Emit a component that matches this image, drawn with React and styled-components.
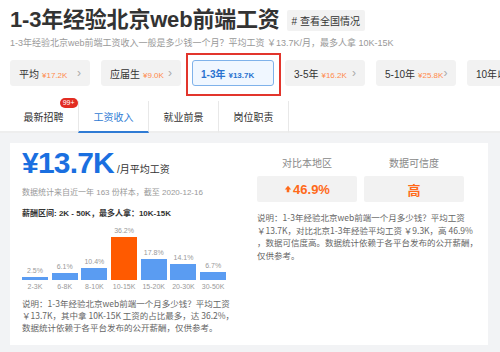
import React from "react";
import styled, { createGlobalStyle } from "styled-components";

const GlobalStyle = createGlobalStyle`
  body {
    margin: 0;
    background: #ffffff;
    font-family: "Liberation Sans", "Noto Sans CJK SC", sans-serif;
    color: #333333;
  }
`;

const filters = [
  { label: "平均", price: "¥17.2K" },
  { label: "应届生", price: "¥9.0K" },
  { label: "1-3年", price: "¥13.7K", active: true },
  { label: "3-5年", price: "¥16.2K" },
  { label: "5-10年", price: "¥25.8K" },
  { label: "10年以上", price: "¥32.1K" },
];

const tabs = [
  { label: "最新招聘", badge: "99+" },
  { label: "工资收入", active: true },
  { label: "就业前景" },
  { label: "岗位职责" },
];

const bars = [
  { range: "2-3K", pct: 2.5 },
  { range: "6-8K", pct: 6.1 },
  { range: "8-10K", pct: 10.4 },
  { range: "10-15K", pct: 36.2, top: true },
  { range: "15-20K", pct: 17.8 },
  { range: "20-30K", pct: 14.1 },
  { range: "30-50K", pct: 6.7 },
];

export default function App() {
  return (
    <Page>
      <GlobalStyle />
      <Header>
        <TitleRow>
          <Title>1-3年经验北京web前端工资</Title>
          <Tag># 查看全国情况</Tag>
        </TitleRow>
        <Subtitle>
          1-3年经验北京web前端工资收入一般是多少钱一个月？平均工资 ￥13.7K/月，最多人拿 10K-15K
        </Subtitle>
        <FilterRow>
          {filters.map((f) => (
            <Pill key={f.label} $active={f.active}>
              <PillText>
                <PillLabel $active={f.active}>{f.label}</PillLabel>
                <PillPrice $active={f.active}>{f.price}</PillPrice>
              </PillText>
              {!f.active && <Chevron>›</Chevron>}
            </Pill>
          ))}
        </FilterRow>
      </Header>

      <TabBar>
        {tabs.map((t) => (
          <Tab key={t.label} $active={t.active}>
            <TabLabel>
              {t.label}
              {t.badge && <Badge>{t.badge}</Badge>}
            </TabLabel>
          </Tab>
        ))}
      </TabBar>

      <Body>
        <Card>
          <LeftCol>
            <PriceLine>
              <BigPrice>¥13.7K</BigPrice>
              <PriceUnit>/月平均工资</PriceUnit>
            </PriceLine>
            <Meta>数据统计来自近一年 163 份样本，截至 2020-12-16</Meta>
            <Range>薪酬区间: 2K - 50K，最多人拿：10K-15K</Range>
            <Chart>
              {bars.map((b) => (
                <Column key={b.range}>
                  <Pct>{b.pct}%</Pct>
                  <Bar $top={b.top} style={{ height: `${b.pct * 1.2}px` }} />
                  <RangeLabel>{b.range}</RangeLabel>
                </Column>
              ))}
            </Chart>
            <Note>
              说明：1-3年经验北京web前端一个月多少钱？平均工资 ￥13.7K，其中拿 10K-15K 工资的占比最多，达 36.2%，数据统计依赖于各平台发布的公开薪酬，仅供参考。
            </Note>
          </LeftCol>

          <RightCol>
            <Stats>
              <Stat>
                <StatLabel>对比本地区</StatLabel>
                <StatBox>
                  <Arrow viewBox="0 0 10 10">
                    <path d="M5 1 L9 5.5 H6.6 V9 H3.4 V5.5 H1 Z" fill="currentColor" />
                  </Arrow>
                  46.9%
                </StatBox>
              </Stat>
              <Stat>
                <StatLabel>数据可信度</StatLabel>
                <StatBox>高</StatBox>
              </Stat>
            </Stats>
            <RightNote>
              说明：1-3年经验北京web前端一个月多少钱？平均工资 ￥13.7K，对比北京1-3年经验平均工资 ￥9.3K，高 46.9% ，数据可信度高。数据统计依赖于各平台发布的公开薪酬，仅供参考。
            </RightNote>
          </RightCol>
        </Card>
      </Body>
    </Page>
  );
}

const Page = styled.div`
  width: 500px;
  height: 352px;
  overflow: hidden;
  display: flex;
  flex-direction: column;
`;

const Header = styled.div`
  padding: 6px 0 0 10px;
`;

const TitleRow = styled.div`
  display: flex;
  align-items: center;
  gap: 7px;
`;

const Title = styled.h1`
  margin: 0;
  font-size: 22px;
  font-weight: bold;
  color: #333333;
  line-height: 28px;
  letter-spacing: -0.2px;
  white-space: nowrap;
`;

const Tag = styled.span`
  background: #f2f2f2;
  border-radius: 2px;
  font-size: 10px;
  color: #333333;
  padding: 3px 5px;
  white-space: nowrap;
`;

const Subtitle = styled.p`
  margin: 2px 0 0;
  font-size: 9px;
  color: #999999;
  white-space: nowrap;
`;

const FilterRow = styled.div`
  display: flex;
  gap: 11px;
  margin-top: 11px;
`;

const Pill = styled.div`
  position: relative;
  flex: 0 0 auto;
  box-sizing: border-box;
  width: ${(p) => (p.$active ? "82px" : "80px")};
  height: 26px;
  border-radius: 3px;
  padding: 0 8px;
  display: flex;
  align-items: center;
  justify-content: space-between;
  background: ${(p) => (p.$active ? "#f0f7ff" : "#f2f2f2")};
  border: 1px solid ${(p) => (p.$active ? "#7fb2ea" : "#f2f2f2")};

  ${(p) =>
    p.$active &&
    `
    &::after {
      content: "";
      position: absolute;
      left: -7px;
      right: -8px;
      top: -8px;
      bottom: -11px;
      border: 2px solid #e2352c;
    }
  `}
`;

const PillText = styled.span`
  display: flex;
  align-items: baseline;
  gap: 3px;
  white-space: nowrap;
`;

const PillLabel = styled.span`
  font-size: 10px;
  color: ${(p) => (p.$active ? "#2a72cf" : "#333333")};
  font-weight: ${(p) => (p.$active ? "bold" : "normal")};
`;

const PillPrice = styled.span`
  font-size: 8px;
  color: ${(p) => (p.$active ? "#2a72cf" : "#ff8a4c")};
  font-weight: ${(p) => (p.$active ? "bold" : "normal")};
`;

const Chevron = styled.span`
  font-size: 12px;
  color: #aaaaaa;
`;

const TabBar = styled.div`
  display: flex;
  margin-top: 15px;
  padding-left: 10px;
  height: 30px;
  border-bottom: 2px solid #eeeeee;
`;

const Tab = styled.div`
  width: 69px;
  display: flex;
  align-items: center;
  justify-content: center;
  font-size: 10px;
  color: ${(p) => (p.$active ? "#2f7bd4" : "#333333")};
  border-left: 1px solid ${(p) => (p.$active ? "#e8e8e8" : "transparent")};
  border-right: 1px solid #e8e8e8;
  margin-left: -1px;
  margin-bottom: -2px;
  border-bottom: 2px solid ${(p) => (p.$active ? "#2f7bd4" : "transparent")};
  &:first-child {
    border-left: none;
  }
`;

const TabLabel = styled.span`
  position: relative;
`;

const Badge = styled.span`
  position: absolute;
  top: -11px;
  right: -14px;
  background: #e22c22;
  color: #ffffff;
  font-size: 7px;
  line-height: 10px;
  padding: 0 3px;
  border-radius: 5px;
  white-space: nowrap;
`;

const Body = styled.div`
  flex: 1;
  background: #f2f3f5;
  padding: 10px 15px 7px 10px;
  display: flex;
`;

const Card = styled.div`
  flex: 1;
  background: #ffffff;
  display: flex;
`;

const LeftCol = styled.div`
  width: 235px;
  box-sizing: border-box;
  padding: 3px 12px 0 12px;
  display: flex;
  flex-direction: column;
`;

const PriceLine = styled.div`
  display: flex;
  align-items: baseline;
  gap: 3px;
`;

const BigPrice = styled.span`
  font-size: 30px;
  font-weight: bold;
  letter-spacing: -0.8px;
  color: #1a6fe0;
  line-height: 34px;
`;

const PriceUnit = styled.span`
  font-size: 10px;
  color: #333333;
`;

const Meta = styled.div`
  margin-top: 6px;
  font-size: 8px;
  color: #999999;
  white-space: nowrap;
`;

const Range = styled.div`
  margin-top: 10px;
  font-size: 8px;
  font-weight: bold;
  color: #333333;
  white-space: nowrap;
`;

const Chart = styled.div`
  margin-top: 9px;
  display: flex;
  align-items: flex-end;
  gap: 3.7px;
`;

const Column = styled.div`
  width: 26px;
  display: flex;
  flex-direction: column;
  align-items: center;
`;

const Pct = styled.span`
  font-size: 7px;
  color: #999999;
  margin-bottom: 3px;
`;

const Bar = styled.div`
  width: 26px;
  background: ${(p) => (p.$top ? "#ff5a00" : "#5a9cf2")};
`;

const RangeLabel = styled.span`
  margin-top: 3px;
  font-size: 7px;
  color: #999999;
  white-space: nowrap;
`;

const Note = styled.p`
  margin: 7px 0 0;
  width: 218px;
  font-family: "Noto Sans CJK SC", sans-serif;
  font-size: 8.5px;
  line-height: 12px;
  color: #666666;
  word-break: break-all;
`;

const RightCol = styled.div`
  flex: 1;
  padding: 12px 10px 0 12px;
  display: flex;
  flex-direction: column;
`;

const Stats = styled.div`
  display: flex;
  gap: 7px;
`;

const Stat = styled.div`
  width: 100px;
  display: flex;
  flex-direction: column;
  align-items: center;
  gap: 6px;
`;

const StatLabel = styled.span`
  font-size: 10px;
  color: #888888;
`;

const StatBox = styled.div`
  width: 100%;
  height: 26px;
  border-radius: 2px;
  background: #f2f2f2;
  display: flex;
  align-items: center;
  justify-content: center;
  gap: 1px;
  font-size: 13px;
  font-weight: bold;
  color: #ff6a1a;
`;

const Arrow = styled.svg`
  width: 8px;
  height: 8px;
`;

const RightNote = styled.p`
  margin: 9px 0 0;
  width: 221px;
  font-family: "Noto Sans CJK SC", sans-serif;
  font-size: 8.5px;
  line-height: 12.7px;
  color: #666666;
`;
